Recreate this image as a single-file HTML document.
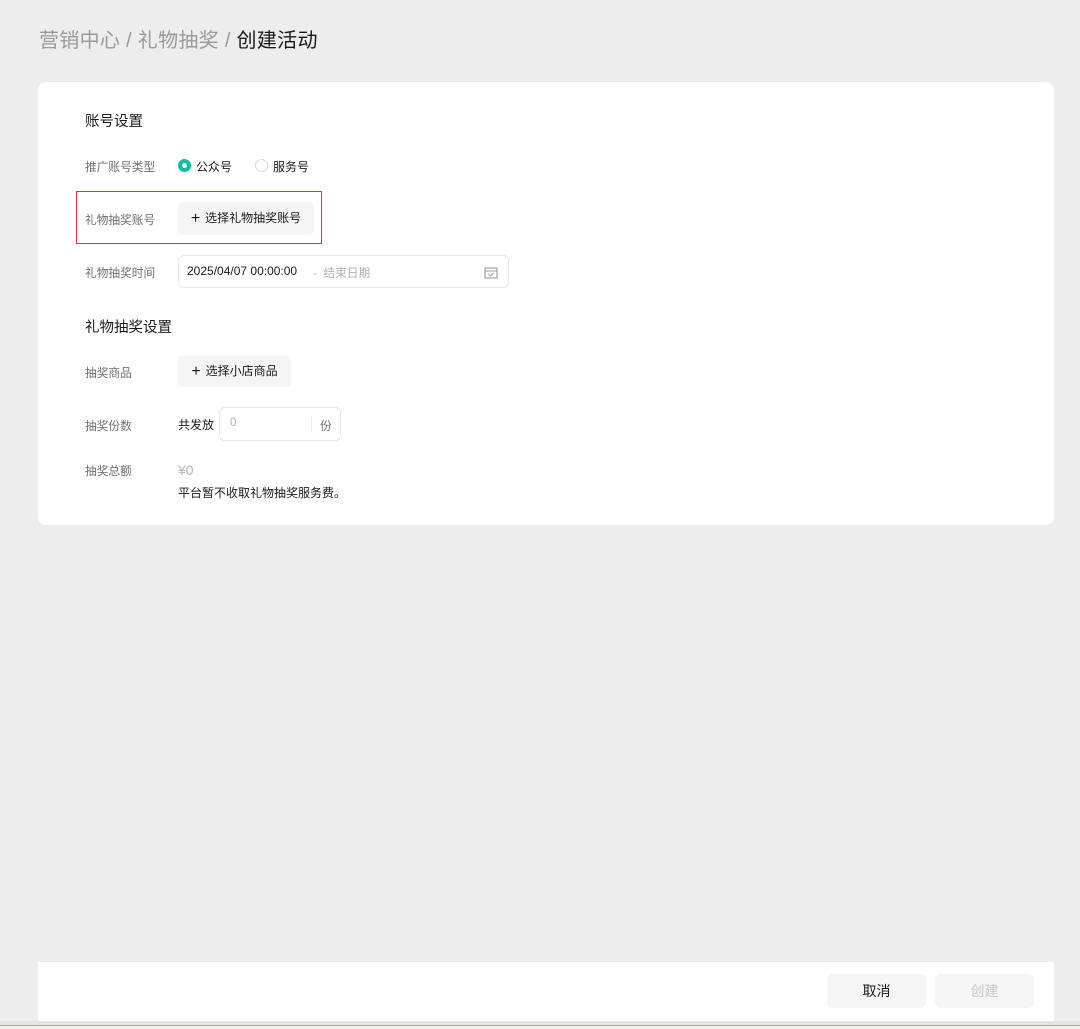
<!DOCTYPE html>
<html><head><meta charset="utf-8"><style>
*{margin:0;padding:0;box-sizing:border-box}
body{width:1080px;height:1029px;background:#ededed;font-family:"Liberation Sans","Noto Sans CJK SC",sans-serif;position:relative;overflow:hidden;color:#1a1a1a}
.abs{position:absolute}
.crumb{left:39px;top:27px;font-size:20px;color:#9a9a9a;line-height:28px;letter-spacing:0.3px}
.crumb b{font-weight:normal;color:#1a1a1a}
.card{left:38px;top:82px;width:1016px;height:443px;background:#fff;border-radius:8px}
.h{font-size:14.5px;color:#1a1a1a}
.lbl{font-size:11.7px;color:#707070}
.txt{font-size:12px;color:#1a1a1a}
.btn{background:#f5f5f5;border-radius:5px;font-size:12px;color:#1a1a1a;line-height:33px;text-align:center}
.btn span{font-size:16px;margin-right:5px;vertical-align:-1px}
</style></head><body>
<div class="abs crumb">营销中心 / 礼物抽奖 / <b>创建活动</b></div>
<div class="abs card"></div>
<div class="abs h" style="left:85px;top:110px">账号设置</div>
<div class="abs lbl" style="left:85px;top:158px">推广账号类型</div>
<div class="abs" style="left:178px;top:159px;width:13px;height:13px;border-radius:50%;border:4px solid #07c1a1"></div>
<div class="abs txt" style="left:196px;top:158px">公众号</div>
<div class="abs" style="left:255px;top:159px;width:13px;height:13px;border-radius:50%;border:1px solid #d8d8d8"></div>
<div class="abs txt" style="left:273px;top:158px">服务号</div>
<div class="abs" style="left:76px;top:191px;width:246px;height:53px;border:1.5px solid #e0353f"></div>
<div class="abs lbl" style="left:85px;top:211px">礼物抽奖账号</div>
<div class="abs btn" style="left:178px;top:202px;width:136px;height:33px"><span>+</span>选择礼物抽奖账号</div>
<div class="abs lbl" style="left:85px;top:264px">礼物抽奖时间</div>
<div class="abs" style="left:178px;top:255px;width:331px;height:33px;border:1px solid #e7e7e7;border-radius:6px"></div>
<div class="abs txt" style="left:187px;top:264px">2025/04/07 00:00:00</div>
<div class="abs lbl" style="left:313px;top:264px;color:#b0b0b0">- &nbsp;结束日期</div>
<svg class="abs" style="left:484px;top:266px" width="14" height="13" viewBox="0 0 14 13"><rect x="1" y="2" width="12" height="10" fill="none" stroke="#999" stroke-width="1.1"/><line x1="1" y1="5" x2="13" y2="5" stroke="#999"/><path d="M4.5 8 6.5 10 9.5 7" fill="none" stroke="#999"/></svg>
<div class="abs h" style="left:85px;top:316px">礼物抽奖设置</div>
<div class="abs lbl" style="left:85px;top:364px">抽奖商品</div>
<div class="abs btn" style="left:178px;top:355px;width:113px;height:32px"><span>+</span>选择小店商品</div>
<div class="abs lbl" style="left:85px;top:417px">抽奖份数</div>
<div class="abs txt" style="left:178px;top:416px">共发放</div>
<div class="abs" style="left:219px;top:407px;width:122px;height:34px;border:1px solid #e7e7e7;border-radius:6px"></div>
<div class="abs lbl" style="left:230px;top:416px;color:#b0b0b0">0</div>
<div class="abs" style="left:311px;top:416px;width:1px;height:15px;background:#eee"></div>
<div class="abs lbl" style="left:320px;top:417px">份</div>
<div class="abs lbl" style="left:85px;top:462px">抽奖总额</div>
<div class="abs" style="left:178px;top:462px;font-size:14px;color:#b5b5b5">¥0</div>
<div class="abs txt" style="left:178px;top:484px">平台暂不收取礼物抽奖服务费。</div>
<div class="abs" style="left:38px;top:962px;width:1016px;height:59px;background:#fff"></div>
<div class="abs btn" style="left:827px;top:974px;width:99px;height:34px;font-size:14px;line-height:34px;border-radius:6px">取消</div>
<div class="abs btn" style="left:935px;top:974px;width:99px;height:34px;font-size:14px;line-height:34px;border-radius:6px;color:#c8c8c8">创建</div>
<div class="abs" style="left:0;top:1021px;width:1080px;height:4px;background:#e4e4e4"></div>
<div class="abs" style="left:0;top:1025px;width:1080px;height:4px;background:#f2f0ea;border-top:1px solid #b8a78f"></div>
</body></html>
